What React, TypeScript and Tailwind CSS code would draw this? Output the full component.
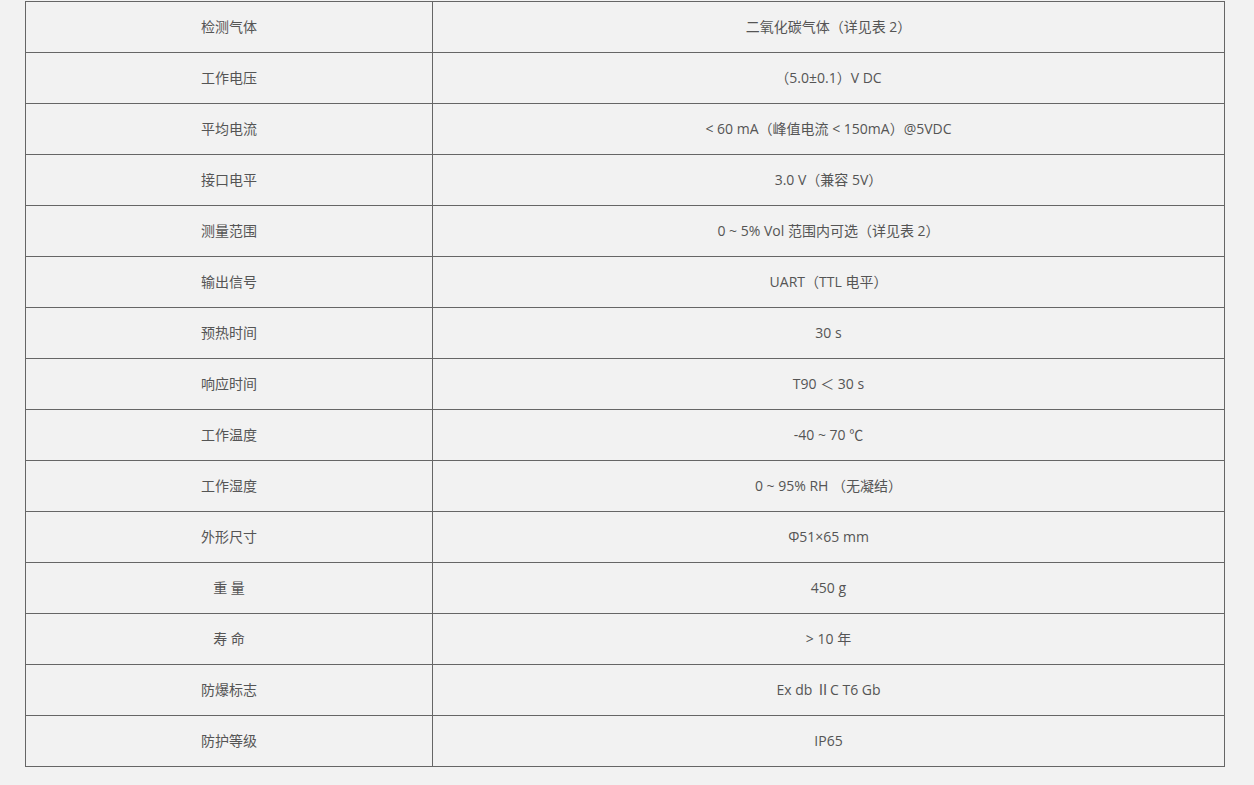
const rows: [string, string][] = [
  ["检测气体", "二氧化碳气体（详见表 2）"],
  ["工作电压", "（5.0±0.1）V DC"],
  ["平均电流", "< 60 mA（峰值电流 < 150mA）@5VDC"],
  ["接口电平", "3.0 V（兼容 5V）"],
  ["测量范围", "0 ~ 5% Vol 范围内可选（详见表 2）"],
  ["输出信号", "UART（TTL 电平）"],
  ["预热时间", "30 s"],
  ["响应时间", "T90 ＜ 30 s"],
  ["工作温度", "-40 ~ 70 ℃"],
  ["工作湿度", "0 ~ 95% RH （无凝结）"],
  ["外形尺寸", "Φ51×65 mm"],
  ["重 量", "450 g"],
  ["寿 命", "> 10 年"],
  ["防爆标志", "Ex db ⅡC T6 Gb"],
  ["防护等级", "IP65"],
]

const App = () => {
  return (
    <div className="min-h-[785px] bg-[#f2f2f2] pt-px font-['Segoe_UI','Open_Sans','Noto_Sans_CJK_SC',sans-serif] text-[14px] text-[#555]">
      <table className="ml-[25px] w-[1200px] border-collapse border border-[#666]">
        <tbody>
          {rows.map(([k, v]) => (
            <tr key={k}>
              <td className="h-[51px] w-[407px] border border-[#666] p-0 pb-[2px] text-center align-middle">{k}</td>
              <td className="h-[51px] border border-[#666] p-0 pb-[2px] text-center align-middle whitespace-pre">{v}</td>
            </tr>
          ))}
        </tbody>
      </table>
    </div>
  )
}
export default App
